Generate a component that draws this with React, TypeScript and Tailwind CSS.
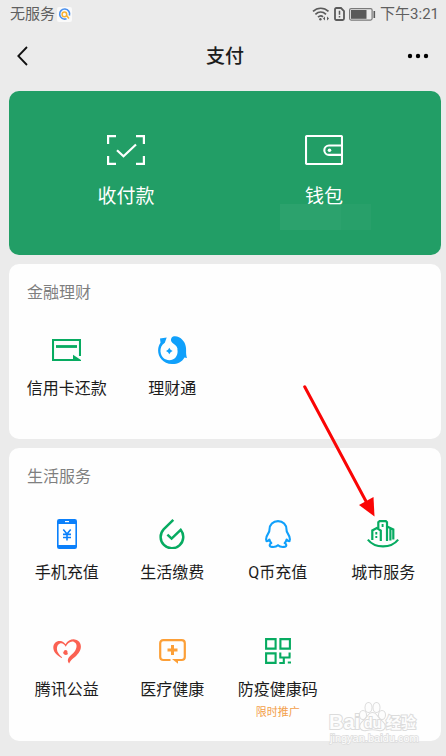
import type { ReactNode } from "react";

const GREEN = "#07ab61";

function WifiIcon() {
  return (
    <svg width="18" height="16" viewBox="0 0 18 16" fill="none" stroke="#5a5a5a" strokeWidth="1.7">
      <path d="M1 5.400C5.500 1.200 12 1.200 16.500 5.400" />
      <path d="M3.400 8.400c3.200-3 7.400-3 10.600 0" />
      <path d="M6 11.200c1.700-1.600 3.600-1.600 5 -.4" />
      <circle cx="8.400" cy="13.300" r="1.200" fill="#5a5a5a" stroke="none" />
      <path d="M11 12.500l2-2v4zM17 12.500l-2-2v4z" fill="#5a5a5a" stroke="none" />
    </svg>
  );
}

function SimIcon() {
  return (
    <svg width="11" height="14" viewBox="0 0 11 14" fill="none" stroke="#5a5a5a" strokeWidth="1.8">
      <path d="M1 2.400Q1 1 2.400 1H7l3 3v7.600Q10 13 8.600 13H2.400Q1 13 1 11.600Z" />
      <path d="M5.500 3.800v4M5.500 9v1.600" strokeWidth="1.5" />
    </svg>
  );
}

function BatteryIcon() {
  return (
    <svg width="27" height="13" viewBox="0 0 27 13">
      <rect x=".6" y=".6" width="22.5" height="11.5" rx="1.5" fill="none" stroke="#7a7a7a" strokeWidth="1.2" />
      <rect x="2" y="2" width="15.5" height="8.8" fill="#5a5a5a" />
      <rect x="24.5" y="3" width="1.6" height="7" fill="#5a5a5a" />
    </svg>
  );
}

function SearchBadge() {
  return (
    <svg width="15" height="15" viewBox="0 0 15 15" fill="none">
      <rect width="15" height="15" rx="2" fill="#fafafa" />
      <path d="M9.500 11.700A5 5 0 1 1 12.400 8.600" stroke="#4a90ee" strokeWidth="1.6" />
      <circle cx="7.400" cy="7.400" r="2.300" stroke="#f8b133" strokeWidth="1.5" />
      <path d="M9.500 8.500l2.500 3" stroke="#f8b133" strokeWidth="1.5" />
    </svg>
  );
}

function ScanIcon() {
  return (
    <svg width="38" height="30" viewBox="0 0 38 30" fill="none" stroke="#fff" strokeWidth="2.2">
      <path d="M1.100 9V1.100H9M29 1.100h7.900V9M36.900 21v7.900H29M9 28.900H1.100V21" />
      <path d="M10 15.300l6.500 6L29 9.500" />
    </svg>
  );
}

function WalletIcon() {
  return (
    <svg width="38" height="30" viewBox="0 0 38 30" fill="none" stroke="#fff" strokeWidth="2.1">
      <rect x="1" y="1" width="36" height="28" rx="1" />
      <path d="M37 10.500H24a4.700 4.700 0 0 0 0 9.400H37" />
      <circle cx="24.500" cy="15.200" r="1.800" fill="#fff" stroke="none" />
    </svg>
  );
}

function CreditCardIcon() {
  return (
    <svg width="29" height="22" viewBox="0 0 29 22" fill="none" stroke={GREEN} strokeWidth="2.1">
      <path d="M28 17V1H1v20h20" />
      <path d="M4 7.500h21" strokeWidth="2.8" />
      <path d="M21 15.800l8 5.200v1H21z" fill={GREEN} stroke="none" />
    </svg>
  );
}

function WealthIcon() {
  return (
    <svg width="30" height="30" viewBox="0 0 30 30" fill="#10a0fb">
      <path d="M3 3.500L9.700 2.500 7.800 7.700C4.600 9.600 3.300 13 3.500 16.500 4 22 8 25.200 12.300 25.200c5 0 8.400-3.900 8.300-9 0-.9-.4-1.800-.1-2.400C20 10.600 17.300 9.400 15.300 7.700 13.700 6.200 13.600 4.200 14.600 2.700 16 .8 19.300.8 22 2.200c5 2.600 7.500 7.800 7.100 13.800-.1 2.500.1 4.500.9 7l-2.500-.6C25 27 20 29.300 15 29.100 6 28.700 1 22 1.100 15.200 1.200 12 2.200 9.500 3.500 7.800z" />
      <path d="M12.300 12.700l1.300 2 2 1.300-2 1.300-1.300 2-1.300-2L9 16l2-1.300z" />
    </svg>
  );
}

function PhoneIcon() {
  return (
    <svg width="20" height="30" viewBox="0 0 20 30">
      <rect width="20" height="30" rx="2.2" fill="#0b80fb" />
      <rect x="1.600" y="5" width="16.800" height="21" fill="#fff" />
      <path d="M8 2.600h4" stroke="#fff" strokeWidth="1.2" />
      <path d="M6.300 10.500L10 15l3.700-4.500M10 15v6.500M6 15.400h8M6 18.500h8" stroke="#0b80fb" strokeWidth="1.6" fill="none" />
    </svg>
  );
}

function UtilityIcon() {
  return (
    <svg width="26" height="30" viewBox="0 0 26 30" fill="none" stroke={GREEN} strokeWidth="2.5">
      <path d="M14.300.9L4.600 10.300A11.300 11.300 0 1 0 21.700 10.800L12.600 19.600 8.400 15.600" />
    </svg>
  );
}

function PenguinIcon() {
  return (
    <svg width="26" height="28" viewBox="0 0 26 28" fill="none" stroke="#10a0fb" strokeWidth="2.1" strokeLinejoin="round">
      <path d="M13 1.100C8 1.100 4.500 4.800 4.500 9.500c0 1.500-.3 2.300-1 3.400C2 15.300 1 17.400 1.100 19.400c.1 2.300 1.200 2.300 3.300.2.400 1.700 1 2.700 1.900 3.500-2.200 1-2.300 3.500.8 3.800 2.300.2 4.500-.3 5.900-1.700 1.400 1.400 3.600 1.900 5.900 1.700 3.100-.3 3-2.800.8-3.800.9-.8 1.500-1.800 1.900-3.500 2.100 2.100 3.200 2.100 3.300-.2.100-2-.9-4.100-2.400-6.500-.7-1.100-1-1.900-1-3.400C21.500 4.800 18 1.100 13 1.100z" />
    </svg>
  );
}

function CityIcon() {
  return (
    <svg width="32" height="28" viewBox="0 0 32 28" fill="none" stroke={GREEN} strokeWidth="2.2">
      <path d="M5.300 20V10.500L9.800 8l4 2.500V21" />
      <path d="M11.300 8V2.300l1.300-1.200h6.200L20 2.300V21" />
      <path d="M20 6.500l6.300 3V19.500M23.400 9v11.500" />
      <path d="M9.300 12v2.500M9.300 16v2M15.600 4v3" strokeWidth="1.9" />
      <path d="M.8 19.600C8 28.700 24 28.700 31.200 19.600" />
    </svg>
  );
}

function CharityIcon() {
  return (
    <svg width="28" height="25" viewBox="0 0 28 25" fill="#fb6152">
      <path d="M8.500 18.900C3 16 .2 12.500.3 8.300.4 4.200 3.600 1.600 7.200 2c2.200.2 4 1.300 5.300 3.200C14.500 2 18 .1 21.500.4c4 .3 6.500 3.400 6.400 7.400-.1 4.500-3.500 8.300-7.300 11.300-1.600 1.300-3.300 2.900-4.500 5.300-1.600-1.700-1.700-4-.3-5.900 1.500-2 4.300-3.700 6-6.300 2.300-3.400 2.700-7.800-.8-9.300-3.200-1.300-6.600 1.600-8.300 4.800C11.300 5 9 3.600 6.900 4.500 3.500 6 3.300 10.500 5 13.600c.9 1.800 2.200 3.300 4.200 4.700z" />
      <circle cx="12.600" cy="12.800" r="1.900" />
      <path d="M9.800 12.500c.3 2.800 1.800 3.900 4.500 3.300l.8-2.300c-2 1-3.800.8-5.300-1z" />
    </svg>
  );
}

function MedicalIcon() {
  return (
    <svg width="27" height="25" viewBox="0 0 27 25" fill="none" stroke="#fc9f37" strokeWidth="2.2">
      <path d="M11.500 21H4.300Q1.200 21 1.200 18V4.200Q1.200 1.200 4.300 1.200H22.700Q25.800 1.200 25.800 4.200V18Q25.800 21 22.700 21H18" />
      <path d="M13.500 6v10M8.500 11h10" strokeWidth="3" />
      <path d="M13 20h6v4.700z" fill="#fc9f37" stroke="none" />
    </svg>
  );
}

function HealthCodeIcon() {
  return (
    <svg width="26" height="26" viewBox="0 0 26 26" fill="none" stroke={GREEN} strokeWidth="2.1">
      <path d="M1.100 1.100h9.500v9.500H1.100zM15.400 1.100h9.500v9.500h-9.500zM1.100 15.400h9.500v9.500H1.100z" />
      <path d="M15.300 14.400v5M14.300 19.500H25.500M24.600 14.400v5M18.800 19.500v5.500h-4.500M22.800 24.500H26" />
    </svg>
  );
}

function Arrow() {
  return (
    <svg
      className="pointer-events-none absolute right-1/2 bottom-full mr-2 -mb-px"
      width="72"
      height="132"
      viewBox="0 0 72 132"
      fill="#fa0505"
    >
      <path d="M1.700 1.700l61 114" stroke="#fa0505" strokeWidth="3" strokeLinecap="round" />
      <path d="M71.500 131.500L70.500 112l-14.500 8z" />
    </svg>
  );
}

function Watermark() {
  return (
    <div className="pointer-events-none absolute right-4 -bottom-[6px]" aria-hidden="true">
      <svg
        width="98"
        height="46"
        viewBox="0 0 98 46"
        fill="#fdfdfd"
        stroke="#dcdcdc"
        strokeWidth="2"
        paintOrder="stroke"
        fontFamily="'Liberation Sans', 'Noto Sans CJK SC', sans-serif"
        fontWeight="700"
      >
        <text x="2" y="28" fontSize="20">Bai</text>
        <ellipse cx="36" cy="14" rx="3" ry="4" />
        <ellipse cx="41.500" cy="6.500" rx="3" ry="4.500" />
        <ellipse cx="49.500" cy="6.500" rx="3" ry="4.500" />
        <ellipse cx="55" cy="14" rx="3" ry="4" />
        <path d="M45.500 12c-4 0-5 5-9 8-6 5-3 10 3 9 4-1 8-1 12 0 6 1 9-4 3-9-4-3-5-8-9-8z" />
        <text x="37" y="27" fontSize="14">du</text>
        <text x="59" y="27" fontSize="15">经验</text>
        <text x="3" y="41" fontSize="11" fontWeight="400" strokeWidth="1.5">jingyan.baidu.com</text>
      </svg>
    </div>
  );
}

type ServiceProps = { icon: ReactNode; label: string; note?: string; children?: ReactNode };

function Service({ icon, label, note, children }: ServiceProps) {
  return (
    <div className="relative">
      <button type="button" className="flex w-full flex-col items-center">
        <span className="flex h-9 items-center">{icon}</span>
        <span className="mt-[9px] text-base leading-6 whitespace-nowrap text-[#1c1c1c]">{label}</span>
        {note && <span className="mt-0.5 text-[11px] leading-[18px] text-[#f3a04b]">{note}</span>}
      </button>
      {children}
    </div>
  );
}

export default function App() {
  return (
    <div className="min-h-screen bg-[#ebebeb] pb-[15px] font-['Roboto','Noto_Sans_CJK_SC',sans-serif] text-[#1c1c1c]">
      <div className="flex h-7 items-center justify-between pr-[7px] pl-[10px] text-[15px] leading-5 text-[#5f5f5f]">
        <div className="flex items-center gap-0.5">
          <span>无服务</span>
          <SearchBadge />
        </div>
        <div className="flex items-center gap-1">
          <WifiIcon />
          <SimIcon />
          <BatteryIcon />
          <span>下午3:21</span>
        </div>
      </div>

      <header className="mr-[5px] ml-[9px] grid h-14 grid-cols-[1fr_auto_1fr] items-center px-2">
        <button type="button" aria-label="返回" className="justify-self-start">
          <svg width="12" height="20" viewBox="0 0 12 20" fill="none" stroke="#111" strokeWidth="1.8">
            <path d="M10 1L1.300 10l8.700 9" />
          </svg>
        </button>
        <h1 className="pt-0.5 text-[19px] leading-7 font-medium">支付</h1>
        <button type="button" aria-label="更多" className="justify-self-end pr-1">
          <svg width="22" height="6" viewBox="0 0 22 6" fill="#000">
            <circle cx="3" cy="3" r="2.200" />
            <circle cx="11" cy="3" r="2.200" />
            <circle cx="19" cy="3" r="2.200" />
          </svg>
        </button>
      </header>

      <main className="mt-[7px] mr-[5px] ml-[9px] flex flex-col gap-[9px]">
        <section className="grid grid-cols-2 rounded-[10px] bg-[#229e66] px-[18px] pt-11 pb-11 text-[19px] leading-7 text-white">
          <button type="button" className="flex flex-col items-center gap-[18px]">
            <ScanIcon />
            <span>收付款</span>
          </button>
          <div className="relative">
            <div className="absolute top-full left-1/2 -mt-[7px] -ml-11 flex h-[26px] w-[91px]">
              <span className="w-[61px] bg-[#2ca26d]" />
              <span className="flex-1 bg-[#28a06a]" />
            </div>
            <button type="button" className="relative flex w-full flex-col items-center gap-[18px]">
              <WalletIcon />
              <span>钱包</span>
            </button>
          </div>
        </section>

        <section className="rounded-[10px] bg-[#fefefe] px-[5px] pt-[17px] pb-[38px]">
          <h2 className="px-[13px] text-base leading-6 text-[#7f7f7f]">金融理财</h2>
          <div className="mt-[27px] grid grid-cols-4">
            <Service icon={<CreditCardIcon />} label="信用卡还款" />
            <Service icon={<WealthIcon />} label="理财通" />
          </div>
        </section>

        <section className="relative rounded-[10px] bg-[#fefefe] px-[5px] pt-[17px] pb-[19px]">
          <h2 className="px-[13px] text-base leading-6 text-[#7f7f7f]">生活服务</h2>
          <div className="mt-[27px] grid grid-cols-4 gap-y-12">
            <Service icon={<PhoneIcon />} label="手机充值" />
            <Service icon={<UtilityIcon />} label="生活缴费" />
            <Service icon={<PenguinIcon />} label="Q币充值" />
            <Service icon={<CityIcon />} label="城市服务">
              <Arrow />
            </Service>
            <Service icon={<CharityIcon />} label="腾讯公益" />
            <Service icon={<MedicalIcon />} label="医疗健康" />
            <Service icon={<HealthCodeIcon />} label="防疫健康码" note="限时推广" />
          </div>
          <Watermark />
        </section>
      </main>
    </div>
  );
}
